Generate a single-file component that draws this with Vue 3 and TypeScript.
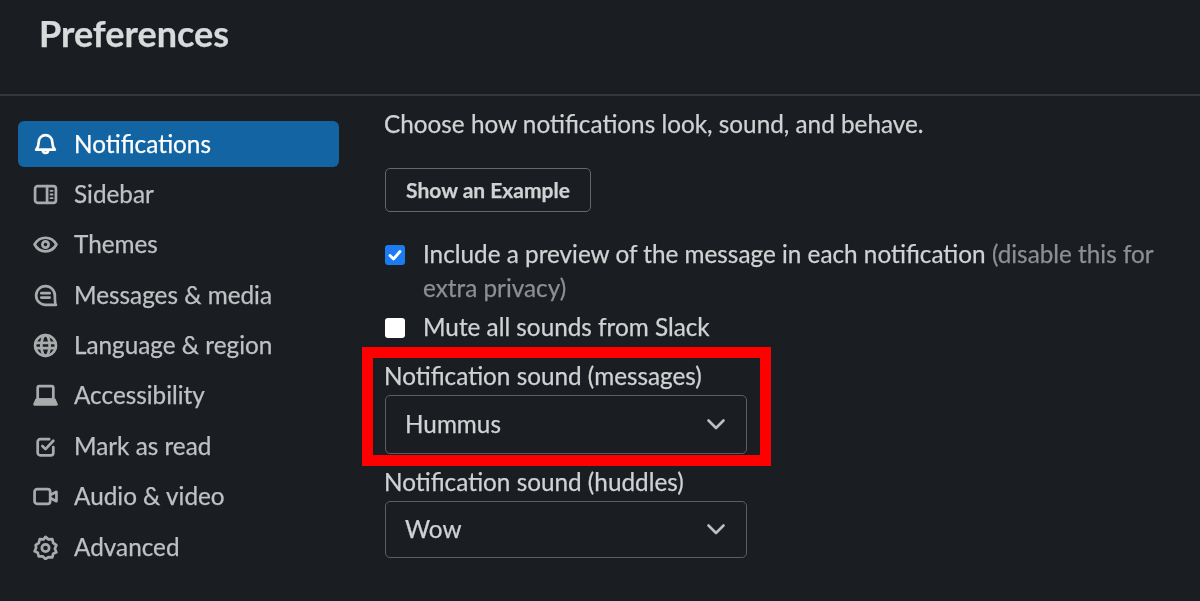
<template>
  <div class="prefs">
    <header class="prefs-header">
      <h1>Preferences</h1>
    </header>
    <div class="prefs-body">
      <nav class="side">
        <a v-for="item in items" :key="item.label" class="side-item" :class="{ active: item.label === 'Notifications' }">
          <svg class="side-icon" viewBox="0 0 24 24" fill="none" stroke="currentColor" stroke-width="2.6" stroke-linecap="round" stroke-linejoin="round">
            <g v-html="item.icon"></g>
          </svg>
          <span class="side-label">{{ item.label }}</span>
        </a>
      </nav>
      <main class="content">
        <p class="intro">Choose how notifications look, sound, and behave.</p>
        <button type="button" class="example-btn">Show an Example</button>
        <div class="check-row preview-row">
          <span class="box checked">
            <svg viewBox="0 0 20 20" width="20" height="20" fill="none">
              <path d="M5 10.500l3.500 3.500L15 6.500" stroke="#fff" stroke-width="2.800" stroke-linecap="round" stroke-linejoin="round" />
            </svg>
          </span>
          <p>Include a preview of the message in each notification <span class="muted">(disable this for extra privacy)</span></p>
        </div>
        <div class="check-row mute-row">
          <span class="box"></span>
          <p>Mute all sounds from Slack</p>
        </div>
        <div class="field marked">
          <div class="field-label">Notification sound (messages)</div>
          <div class="select tall">
            <span class="select-value">Hummus</span>
            <svg viewBox="0 0 20 20" width="20" height="20" fill="none">
              <path d="M2.500 5.500l7.500 7.500 7.500-7.500" stroke="#bdbec0" stroke-width="2.600" stroke-linecap="round" stroke-linejoin="round" />
            </svg>
          </div>
          <div class="red-box"></div>
        </div>
        <div class="field second">
          <div class="field-label">Notification sound (huddles)</div>
          <div class="select">
            <span class="select-value">Wow</span>
            <svg viewBox="0 0 20 20" width="20" height="20" fill="none">
              <path d="M2.500 5.500l7.500 7.500 7.500-7.500" stroke="#bdbec0" stroke-width="2.600" stroke-linecap="round" stroke-linejoin="round" />
            </svg>
          </div>
        </div>
      </main>
    </div>
  </div>
</template>

<script setup lang="ts">
interface NavItem {
  label: string;
  icon: string;
}

const items: NavItem[] = [
  {
    label: 'Notifications',
    icon: '<path d="M12 3a6.500 6.500 0 0 0-6.500 6.500c0 4-1 5.500-2.500 7.500h18c-1.500-2-2.500-3.500-2.500-7.500A6.500 6.500 0 0 0 12 3z"/><path d="M9.500 17.500a2.500 2.500 0 0 0 5 0"/>'
  },
  {
    label: 'Sidebar',
    icon: '<rect x="2" y="4" width="20" height="16" rx="2.500"/><path d="M13.500 4v16"/><path d="M16.800 8.500h2M16.800 12h2M16.800 15.500h2" stroke-width="1.800"/>'
  },
  {
    label: 'Themes',
    icon: '<path d="M1.500 12C4 7.500 8 5.500 12 5.500s8 2 10.500 6.500C20 16.500 16 18.500 12 18.500S4 16.500 1.500 12z"/><circle cx="12" cy="12" r="3"/>'
  },
  {
    label: 'Messages & media',
    icon: '<path d="M21 12a9 9 0 1 0-9 9h10c-.8-.8-1-2.500-1-9z"/><path d="M8 9.800h8M8 14h8"/>'
  },
  {
    label: 'Language & region',
    icon: '<circle cx="12" cy="12" r="10"/><path d="M2.500 9.500h19M2.500 14.500h19"/><ellipse cx="12" cy="12" rx="4" ry="10"/>'
  },
  {
    label: 'Accessibility',
    icon: '<rect x="4.500" y="3" width="15" height="13" rx="1.500"/><path d="M3.500 16h17l2 4.500h-21z" fill="currentColor"/>'
  },
  {
    label: 'Mark as read',
    icon: '<path d="M19.500 12.500V18a2.500 2.500 0 0 1-2.500 2.500H7A2.500 2.500 0 0 1 4.500 18V7.500A2.500 2.500 0 0 1 7 5h8.500"/><path d="M9 11.500l3 3 7.500-8"/>'
  },
  {
    label: 'Audio & video',
    icon: '<rect x="1.500" y="5" width="15" height="14" rx="2.500"/><path d="M16.500 10.500l6-3v9l-6-3"/>'
  },
  {
    label: 'Advanced',
    icon: '<path d="M12 1.800l2.800 2.400 3.700-.2.900 3.600 3 2.200-1.400 3.400 1.400 3.400-3 1.300-.9 3.600-3.700-.2L12 23l-2.800-2.600-3.700.2-.9-3.600-3-1.300 1.400-3.400L2.600 9.800l3-2.200.9-3.600 3.700.2z"/><circle cx="12" cy="12.500" r="3.500"/>'
  }
];
</script>

<style>
html,
body {
  background: #1a1d21;
}
</style>

<style scoped>
.prefs {
  width: 1200px;
  height: 601px;
  overflow: hidden;
  background: #1a1d21;
  color: #d1d2d3;
  font-family: Lato, "Open Sans", sans-serif;
  font-size: 24.3px;
  -webkit-text-stroke: 0.25px currentColor;
  filter: blur(0.4px);
}

.prefs-header {
  height: 96px;
  box-sizing: border-box;
  padding: 12px 39px 0;
  border-bottom: 2px solid #33363a;
}

.prefs-header h1 {
  margin: 0;
  font-size: 36px;
  line-height: 42px;
  font-weight: 700;
  color: #d9dadc;
}

.prefs-body {
  display: flex;
  padding-top: 25px;
}

.side {
  width: 321px;
  margin-left: 18px;
  display: flex;
  flex-direction: column;
  gap: 4.4px;
}

.side-item {
  height: 46px;
  display: flex;
  align-items: center;
  gap: 16px;
  padding-left: 15px;
  border-radius: 6px;
  color: #c0c1c3;
}

.side-item.active {
  background: #1264a3;
  color: #fff;
}

.side-label {
  margin-bottom: 2px;
}

.side-icon {
  width: 25px;
  height: 25px;
  flex: none;
  color: #a9aaab;
}

.active .side-icon {
  color: #fff;
}

.content {
  margin-left: 45px;
  width: 791px;
}

.intro {
  margin: 0;
  line-height: 32px;
  margin-top: -13px;
}

.example-btn {
  display: block;
  margin-top: 28px;
  margin-left: 1px;
  width: 206px;
  height: 44px;
  padding: 0 0 2px;
  background: transparent;
  border: 1.5px solid #65676a;
  border-radius: 5px;
  color: #d1d2d3;
  font-family: inherit;
  font-size: 21px;
  font-weight: 700;
}

.check-row {
  display: flex;
  gap: 18px;
  padding-left: 1px;
}

.check-row p {
  margin: 0;
  line-height: 34px;
}

.preview-row {
  margin-top: 25px;
}

.mute-row {
  margin-top: 5px;
}

.muted {
  color: #8e8f91;
}

.box {
  flex: none;
  width: 20px;
  height: 20px;
  margin-top: 8px;
  border-radius: 3px;
  background: #fff;
}

.box.checked {
  background: #1a7cf0;
}

.box svg {
  display: block;
}

.field {
  position: relative;
  width: 362px;
  margin-left: 1px;
}

.marked {
  margin-top: 16px;
}

.second {
  margin-top: 12px;
}

.field-label {
  line-height: 32px;
  white-space: nowrap;
  margin-bottom: 3px;
  margin-left: -1px;
}

.select {
  height: 57px;
  box-sizing: border-box;
  display: flex;
  align-items: center;
  justify-content: space-between;
  padding: 0 20px 0 19px;
  border: 1.5px solid #5c5e61;
  border-radius: 5px;
}

.select.tall {
  height: 59px;
}

.select-value {
  margin-bottom: 3px;
}

.red-box {
  position: absolute;
  left: -23px;
  top: -13px;
  width: 409px;
  height: 119px;
  box-sizing: border-box;
  border: 11px solid #ff0000;
  pointer-events: none;
}
</style>
